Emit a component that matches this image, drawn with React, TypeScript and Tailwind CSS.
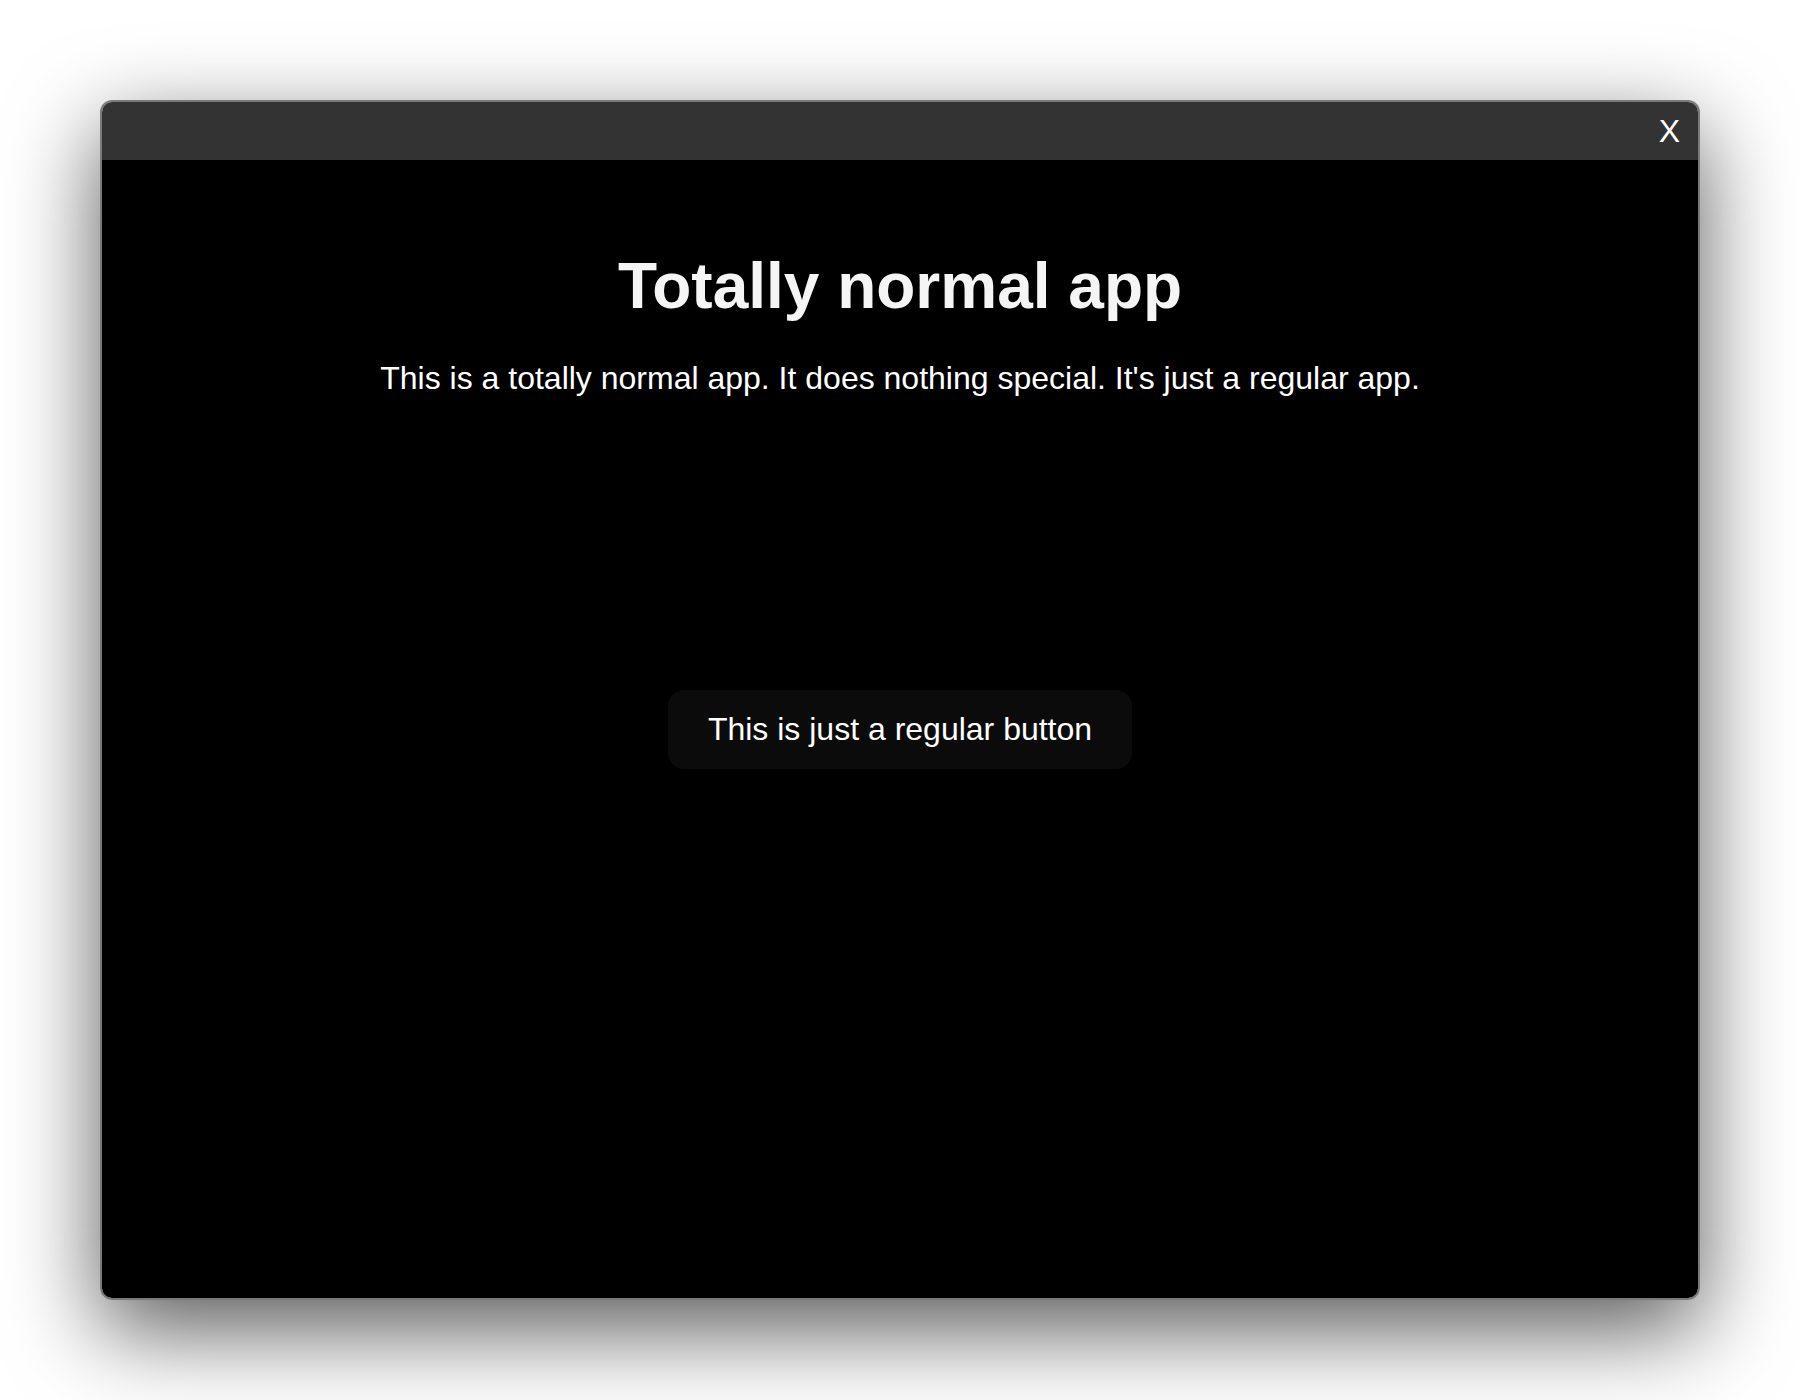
export default function App() {
  return (
    <div className="min-h-screen bg-white pt-[100px] pl-[100px] font-['Liberation_Sans',Arial,sans-serif]">
      <div className="w-[1600px] h-[1200px] rounded-[12px] overflow-hidden border-2 border-[#7a7a7a] flex flex-col shadow-[0_30px_90px_rgba(0,0,0,0.65)]">
        {/* title bar */}
        <div className="h-[58px] shrink-0 bg-[#333333] flex items-center justify-end pr-[18px]">
          <button className="text-[32px] leading-[37px] text-white">X</button>
        </div>

        <div className="flex-1 bg-black grid grid-rows-[1fr_auto_1fr] justify-items-center">
          <div className="pt-[90px] text-center">
            <h1 className="text-[64px] leading-[72px] font-bold text-[#f5f5f5]">
              Totally normal app
            </h1>
            <p className="mt-[38px] text-[32px] leading-[36px] text-white">
              This is a totally normal app. It does nothing special. It's just a regular app.
            </p>
          </div>

          <button className="w-[464px] h-[79px] rounded-[16px] bg-[#0b0b0b] text-[32px] leading-[37px] text-white">
            This is just a regular button
          </button>

          <div />
        </div>
      </div>
    </div>
  );
}
